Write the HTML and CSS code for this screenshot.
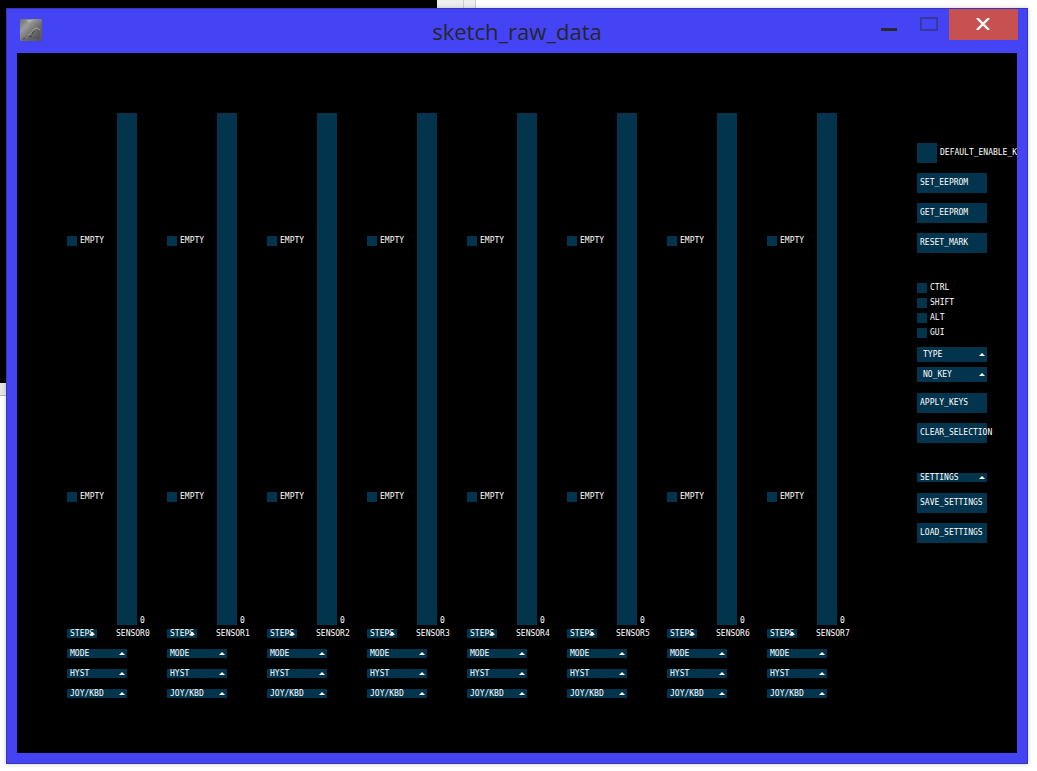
FILE: index.html
```html
<!DOCTYPE html>
<html lang="en">
<head>
<meta charset="utf-8">
<title>sketch_raw_data</title>
<link rel="stylesheet" href="styles.css">
</head>
<body>
<div class="backdrop-dark"></div>
<div class="backdrop-tab"></div>
<div class="backdrop-edge"></div>
<main class="window">
  <header class="titlebar">
    <svg class="app-icon" viewBox="0 0 22 22" aria-hidden="true">
      <defs>
        <linearGradient id="metal" x1="0" y1="0" x2="1" y2="1">
          <stop offset="0" stop-color="#6c6c6c"/><stop offset=".3" stop-color="#9a9a9a"/><stop offset=".6" stop-color="#6c6c6c"/><stop offset="1" stop-color="#444"/>
        </linearGradient>
      </defs>
      <rect width="22" height="22" rx="1" fill="url(#metal)"/>
      <path d="M6 1h7l-4 3z" fill="#bbb" opacity=".7"/>
      <path d="M11 14l3-4 3-1 3 2M8 16l3-2" fill="none" stroke="#a0a0a0" stroke-width="1"/>
      <path d="M3 20l2-1M9 18l3-1M14 12l-2 3" fill="none" stroke="#3c3c3c" stroke-width="1"/>
      <path d="M1 21h20V5" fill="none" stroke="#666" stroke-width="1"/>
    </svg>
    <h1 class="title">sketch_raw_data</h1>
    <div class="caption">
      <button class="cap-btn" type="button" aria-label="Minimize"><svg width="16" height="14" viewBox="0 0 16 14"><path d="M0 11h16v3H0z" fill="#29292e"/></svg></button>
      <button class="cap-btn" type="button" aria-label="Maximize"><svg width="18" height="14" viewBox="0 0 18 14"><path d="M1 1h16v12H1z" fill="none" stroke="#3737a0" stroke-width="2"/></svg></button>
      <button class="cap-btn close" type="button" aria-label="Close"><svg width="14" height="12" viewBox="0 0 14 12"><path d="M1 0l12 12M13 0L1 12" fill="none" stroke="#fff" stroke-width="2.4"/></svg></button>
    </div>
  </header>
  <div class="client">
    <div class="sensors" id="sensors"></div>
    <aside class="panel">
      <label class="toggle large"><input type="checkbox">DEFAULT_ENABLE_K</label>
      <button class="btn" type="button">SET_EEPROM</button>
      <button class="btn" type="button">GET_EEPROM</button>
      <button class="btn" type="button">RESET_MARK</button>
      <div class="modifiers">
        <label class="toggle"><input type="checkbox">CTRL</label>
        <label class="toggle"><input type="checkbox">SHIFT</label>
        <label class="toggle"><input type="checkbox">ALT</label>
        <label class="toggle"><input type="checkbox">GUI</label>
      </div>
      <div class="key-lists">
        <div class="drop tall"><select aria-label="Type"><option>TYPE</option></select></div>
        <div class="drop tall"><select aria-label="Key"><option>NO_KEY</option></select></div>
      </div>
      <button class="btn" type="button">APPLY_KEYS</button>
      <button class="btn" type="button">CLEAR_SELECTION</button>
      <div class="drop settings"><select aria-label="Settings"><option>SETTINGS</option></select></div>
      <button class="btn" type="button">SAVE_SETTINGS</button>
      <button class="btn" type="button">LOAD_SETTINGS</button>
    </aside>
  </div>
</main>
<script src="sensors.js"></script>
</body>
</html>
```
FILE: sensors.js
```js
const drop = (name, i, cls = "") =>
  `<div class="drop ${cls}"><select aria-label="${name} ${i}"><option>${name}</option></select></div>`;

document.getElementById("sensors").innerHTML = Array.from({ length: 8 }, (_, i) => `
  <section class="sensor">
    <div class="meter">
      <div class="marks">
        <label class="toggle"><input type="checkbox">EMPTY</label>
        <label class="toggle"><input type="checkbox">EMPTY</label>
      </div>
      <input class="bar" type="range" id="s${i}" min="0" max="1023" value="0">
      <output class="value" for="s${i}">0</output>
    </div>
    <div class="name-row">${drop("STEPS", i, "steps")}<label for="s${i}">SENSOR${i}</label></div>
    ${drop("MODE", i)}
    ${drop("HYST", i)}
    ${drop("JOY/KBD", i)}
  </section>`).join("");
```
FILE: styles.css
```css
* {
  box-sizing: border-box;
}

body {
  margin: 0;
  min-height: 100vh;
  padding: 8px 9px 7px 6px;
  display: flex;
  background: #fff;
  overflow: hidden;
}

.backdrop-dark,
.backdrop-tab,
.backdrop-edge {
  position: absolute;
  top: 0;
  left: 0;
}

.backdrop-dark {
  width: 437px;
  height: 383px;
  background: #000;
}

.backdrop-tab {
  left: 437px;
  width: 39px;
  height: 8px;
  background: linear-gradient(90deg, #eee 26px, #ccc 26px 27px, #eee 27px 38px, #ccc 38px);
}

.backdrop-edge {
  top: 383px;
  width: 6px;
  height: 13px;
  background: #e6e6e6;
  border-bottom: 1px solid #bbb;
}

.window {
  position: relative;
  flex: 1;
  display: flex;
  flex-direction: column;
  padding: 0 10px 10px;
  border: 1px solid #3535b8;
  background: #4444f4;
  box-shadow: 0 0 5px rgba(0, 0, 0, 0.2);
}

.titlebar {
  display: grid;
  grid-template-columns: 1fr auto 1fr;
  height: 44px;
  flex: none;
}

.app-icon {
  width: 22px;
  height: 22px;
  margin: 10px 0 0 3px;
}

.title {
  margin: 5px 0 0;
  font: 400 22px/34px "Open Sans", sans-serif;
  color: #26262b;
}

.caption {
  display: flex;
  justify-content: flex-end;
  margin-right: -1px;
}

.cap-btn {
  display: flex;
  align-items: center;
  justify-content: center;
  width: 40px;
  height: 31px;
  padding: 0 0 2px;
  border: 0;
  background: none;
}

.close {
  width: 69px;
  padding-right: 1px;
  background: #c75050;
}

.client {
  flex: 1;
  display: grid;
  grid-template-columns: 1fr 100px;
  column-gap: 50px;
  padding: 60px 0 40px 50px;
  overflow: hidden;
  background: #000;
  color: #fff;
  font: 8px/10px "DejaVu Sans Mono", monospace;
  white-space: nowrap;
}

.sensors {
  display: grid;
  grid-template-columns: repeat(8, 1fr);
}

.sensor {
  display: flex;
  flex-direction: column;
}

.meter {
  display: grid;
  grid-template-columns: 50px 20px 1fr;
  height: 512px;
  margin-bottom: 4px;
}

.marks {
  display: flex;
  flex-direction: column;
  gap: 246px;
  padding-top: 123px;
}

.bar {
  appearance: none;
  writing-mode: vertical-lr;
  width: 20px;
  height: 100%;
  margin: 0;
  background: #02344d;
}

.bar::-webkit-slider-thumb {
  appearance: none;
  width: 20px;
  height: 0;
}

.value {
  align-self: end;
  padding-left: 3px;
  line-height: 8px;
}

.name-row {
  display: flex;
  gap: 19px;
  height: 9px;
  margin-bottom: 11px;
}

.toggle {
  display: flex;
  align-items: center;
  gap: 3px;
  height: 10px;
}

.toggle input {
  appearance: none;
  flex: none;
  width: 10px;
  height: 10px;
  margin: 0;
  background: #02344d;
}

.toggle.large,
.large input {
  height: 20px;
}

.large input {
  width: 20px;
}

.drop {
  position: relative;
  width: 60px;
  height: 9px;
  margin-bottom: 11px;
}

.drop::after {
  content: "";
  position: absolute;
  right: 2px;
  top: 50%;
  margin-top: -2px;
  border: solid transparent;
  border-width: 0 3px 3px;
  border-bottom-color: #fff;
}

.drop select {
  appearance: none;
  display: block;
  width: 100%;
  height: 100%;
  padding: 0 3px;
  border: 0;
  border-radius: 0;
  background: #02344d;
  color: inherit;
  font: inherit;
  line-height: 9px;
}

.drop.steps {
  width: 30px;
}

.steps select {
  padding-right: 0;
}

.panel {
  display: flex;
  flex-direction: column;
  align-items: flex-start;
  gap: 10px;
  padding-top: 30px;
}

.btn {
  width: 70px;
  height: 20px;
  padding: 0 3px;
  border: 0;
  background: #02344d;
  color: inherit;
  font: inherit;
  text-align: left;
  white-space: nowrap;
}

.modifiers {
  display: grid;
  gap: 5px;
  margin-top: 20px;
}

.key-lists {
  display: grid;
  gap: 5px;
  margin: -1px 0 1px;
}

.panel .drop {
  width: 70px;
  margin: 0;
}

.panel .tall {
  height: 15px;
}

.tall select {
  padding: 0 6px;
}

.panel .settings {
  margin: 20px 0 1px;
}
```
